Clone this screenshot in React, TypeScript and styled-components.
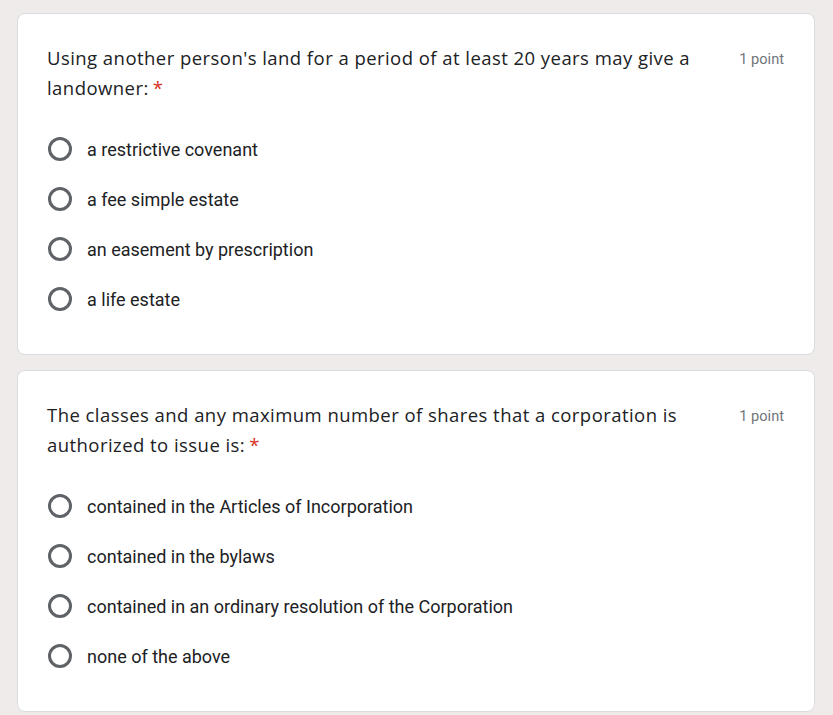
import styled, { createGlobalStyle } from "styled-components";

const GlobalStyle = createGlobalStyle`
  html, body {
    margin: 0;
    padding: 0;
    background: #f0ebeb;
  }
`;

const Page = styled.div`
  display: flex;
  flex-direction: column;
  gap: 15px;
  padding: 13px 18px 0 17px;
`;

const Card = styled.div`
  background: #ffffff;
  border: 1px solid #dadce0;
  border-radius: 8px;
  padding: 29px 30px 30px 29px;
`;

const Header = styled.div`
  display: flex;
  align-items: flex-start;
  gap: 24px;
  margin-bottom: 21px;
`;

const Question = styled.div`
  flex: 1;
  font-family: "Open Sans", "Liberation Sans", sans-serif;
  font-size: 18.5px;
  line-height: 30px;
  color: #202124;
  letter-spacing: 0.45px;
`;

const Required = styled.span`
  color: #d93025;
  margin-left: 4px;
`;

const Points = styled.div`
  font-family: Roboto, "Liberation Sans", sans-serif;
  font-size: 14.6px;
  line-height: 30px;
  color: #70757a;
  white-space: nowrap;
  padding-top: 1px;
`;

const Options = styled.div`
  display: flex;
  flex-direction: column;
`;

const Option = styled.label`
  display: flex;
  align-items: center;
  height: 50px;
  gap: 15px;
  font-family: Roboto, "Liberation Sans", sans-serif;
  font-size: 18px;
  color: #202124;
  cursor: pointer;
`;

const Radio = styled.span`
  box-sizing: border-box;
  width: 24px;
  height: 24px;
  border-radius: 50%;
  border: 3px solid #5f6368;
  flex-shrink: 0;
  margin-left: 1px;
`;

type Q = { text: string; options: string[] };

const questions: Q[] = [
  {
    text: "Using another person's land for a period of at least 20 years may give a landowner:",
    options: [
      "a restrictive covenant",
      "a fee simple estate",
      "an easement by prescription",
      "a life estate",
    ],
  },
  {
    text: "The classes and any maximum number of shares that a corporation is authorized to issue is:",
    options: [
      "contained in the Articles of Incorporation",
      "contained in the bylaws",
      "contained in an ordinary resolution of the Corporation",
      "none of the above",
    ],
  },
];

export default function App() {
  return (
    <>
      <GlobalStyle />
      <Page>
        {questions.map((q) => (
          <Card key={q.text}>
            <Header>
              <Question>
                {q.text}
                <Required>*</Required>
              </Question>
              <Points>1 point</Points>
            </Header>
            <Options>
              {q.options.map((o) => (
                <Option key={o}>
                  <Radio />
                  {o}
                </Option>
              ))}
            </Options>
          </Card>
        ))}
      </Page>
    </>
  );
}
